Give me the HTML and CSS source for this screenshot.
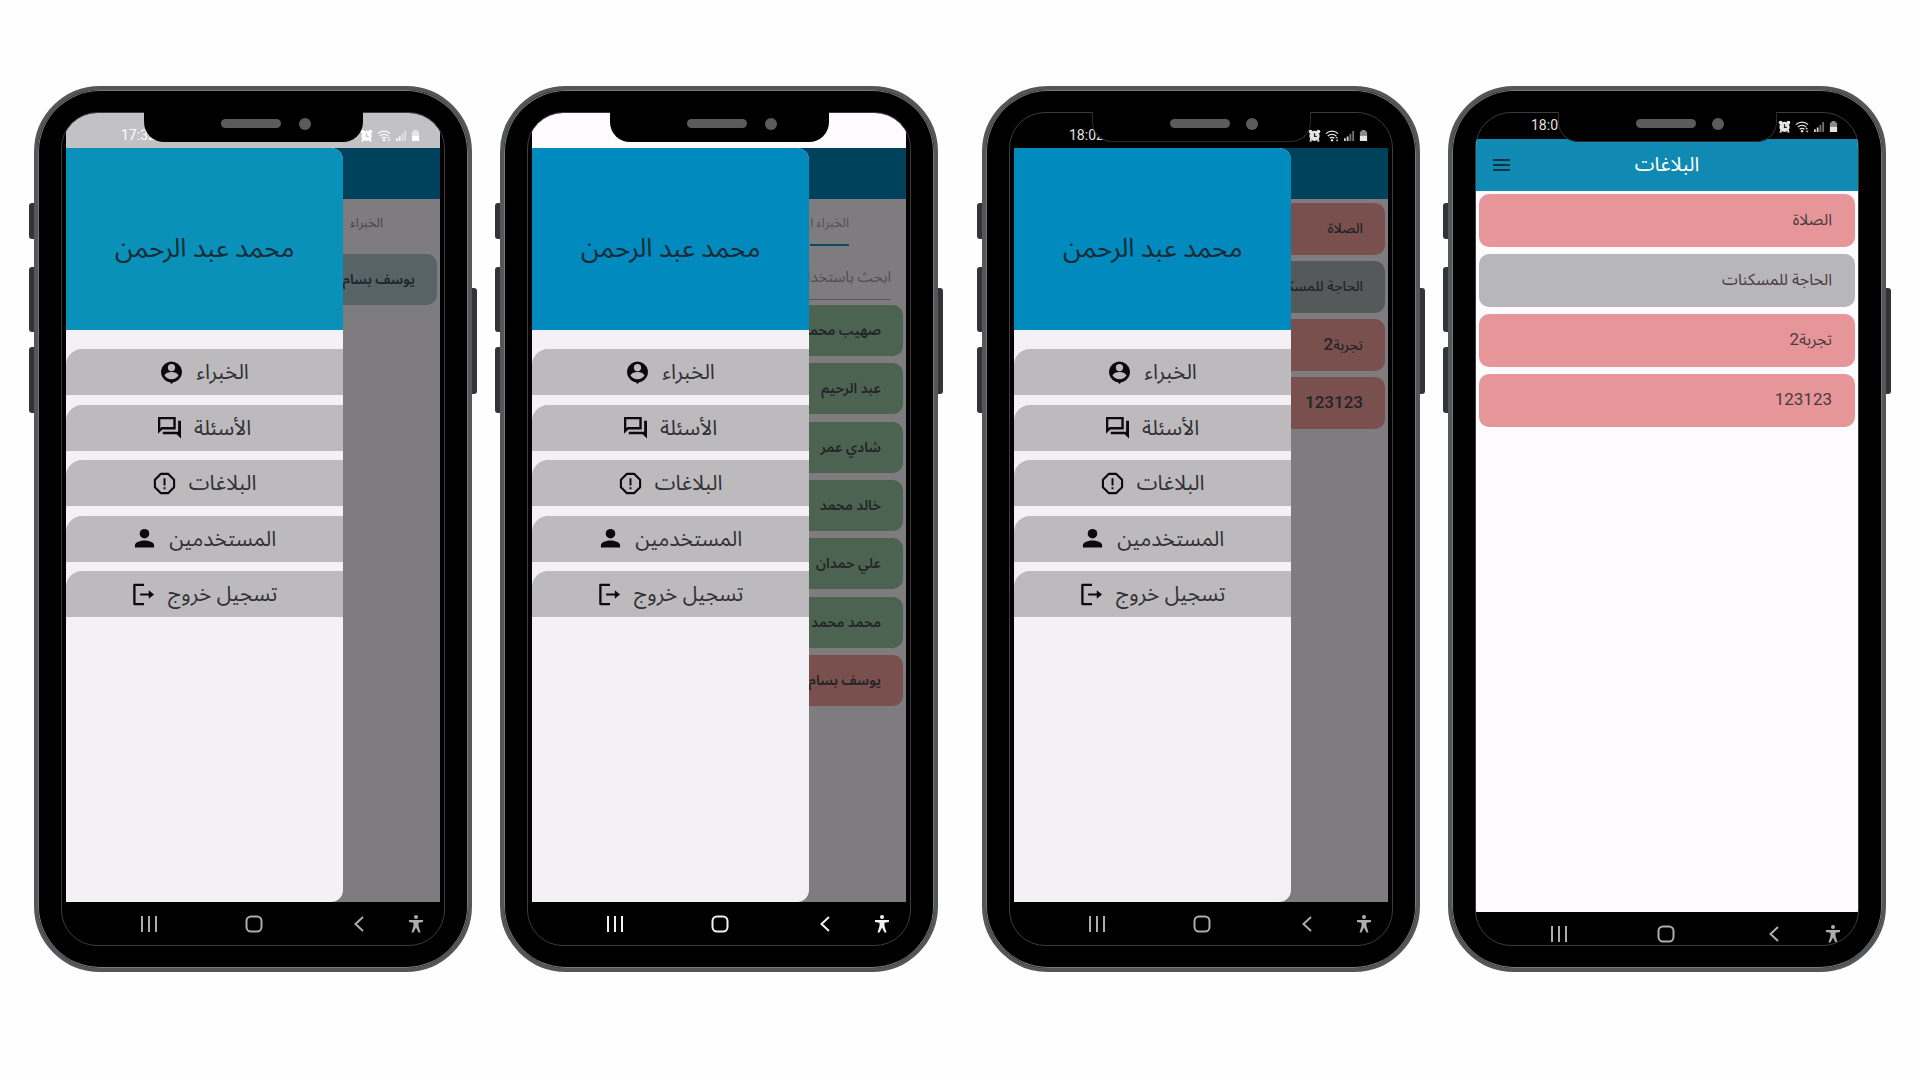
FILE: index.html
```html
<!DOCTYPE html>
<html lang="ar">
<head>
<meta charset="utf-8">
<title>البلاغات</title>
<link rel="stylesheet" href="styles.css">
</head>
<body>
<svg class="sprite" aria-hidden="true">
  <symbol id="pin" viewBox="0 0 24 24"><path fill-rule="evenodd" d="M12 .5a11 11 0 0 0-4 21.200l2.200.5L12 24l1.800-1.800 2.200-.5A11 11 0 0 0 12 .5zm0 2.600a3.800 3.800 0 1 1 0 7.600 3.800 3.800 0 0 1 0-7.600zM12 19c-3 0-5.800-1.300-7.300-3.800.8-2.400 4.800-3.600 7.300-3.600s6.500 1.200 7.300 3.600c-1.500 2.500-4.300 3.800-7.300 3.800z"/></symbol>
  <symbol id="chat" viewBox="0 0 24 24"><path d="M18.500 1H0v17.500L4.500 14h14zM16 3.400v8.200H3.600l-1.200 1.200V3.400zM21 5v11.500H5V19h14.500l4.500 4.500V5z"/></symbol>
  <symbol id="report" viewBox="0 0 24 24"><path d="M8 2h8l6 6v8l-6 6H8l-6-6V8z" fill="none" stroke="currentColor" stroke-width="2.200" stroke-linejoin="round"/><path d="M11 6.500h2v7.500h-2zM11 16h2v2h-2z"/></symbol>
  <symbol id="person" viewBox="0 0 24 24"><circle cx="12" cy="7" r="5"/><path d="M2 21.500v-2.500c0-3.500 6-5 10-5s10 1.500 10 5v2.500z"/></symbol>
  <symbol id="logout" viewBox="0 0 24 24"><path d="M12.500 2H2.500v20h10" fill="none" stroke="currentColor" stroke-width="2.400" stroke-linejoin="round"/><path d="M8.500 10.900h9V7.500L23 12l-5.500 4.500v-3.400h-9z"/></symbol>
  <symbol id="alarm" viewBox="0 0 14 14"><circle cx="7" cy="7.500" r="5.500"/><circle cx="2.800" cy="2.800" r="2"/><circle cx="11.200" cy="2.800" r="2"/><path d="M2.500 10L1.500 13.500h3zM11.500 10l1 3.500h-3z"/><path class="hand" d="M7 4.500v3.500h2.500" fill="none" stroke-width="1.300"/></symbol>
  <symbol id="wifi" viewBox="0 0 16 14"><path d="M1 5a9 9 0 0 1 13 0M3 7.500a6.500 6.500 0 0 1 9 0M5 10a3.500 3.500 0 0 1 5 0" fill="none" stroke="currentColor" stroke-width="1.400"/><circle cx="7.500" cy="12" r="1.300"/><path d="M11 10l1.500-2L14 10zM11.500 11.500l1.500 2 1.500-2z"/></symbol>
  <symbol id="signal" viewBox="0 0 12 14"><path opacity=".9" d="M0 10h2v3H0zM3 8h2v5H3z"/><path opacity=".5" d="M6 5h2v8H6zM9 2h2v11H9z"/></symbol>
  <symbol id="battery" viewBox="0 0 10 14"><path opacity=".6" d="M3 1h4v1l2 1v4H1V3l2-1z"/><path d="M1 7h8v6H1z"/></symbol>
  <symbol id="recents" viewBox="0 0 18 18"><path d="M2 1v16M9 1v16M16 1v16" fill="none" stroke="currentColor" stroke-width="2"/></symbol>
  <symbol id="home" viewBox="0 0 18 18"><rect x="1.500" y="1.500" width="15" height="15" rx="4.500" fill="none" stroke="currentColor" stroke-width="2"/></symbol>
  <symbol id="back" viewBox="0 0 18 18"><path d="M13 2L5.500 9l7.500 7" fill="none" stroke="currentColor" stroke-width="2"/></symbol>
  <symbol id="access" viewBox="0 0 18 18"><circle cx="9" cy="2" r="2"/><path d="M2 5h14v2l-4.500.8V11l2 6.500h-2L9 12.500 6.500 17.500h-2l2-6.500V7.800L2 7z"/></symbol>
</svg>

<main class="gallery">
  <div class="pair">
    <section class="phone phone-soft">
      <i class="key key-a"></i><i class="key key-b"></i><i class="key key-c"></i><i class="key key-power"></i>
      <div class="notch"><i class="speaker"></i><i class="camera"></i></div>
      <div class="screen">
        <div class="status"><time>17:32</time><span class="signs"><svg class="s14"><use href="#alarm"/></svg><svg class="s16"><use href="#wifi"/></svg><svg class="s12"><use href="#signal"/></svg><svg class="s10"><use href="#battery"/></svg></span></div>
        <div class="app">
          <div class="behind" dir="rtl">
            <div class="bar"></div>
            <div class="tabs"><a href="#experts">الخبراء</a></div>
            <ul class="cards cards-one"><li class="teal">يوسف بسام</li></ul>
          </div>
          <nav class="drawer" dir="rtl">
            <h2 class="owner">محمد عبد الرحمن</h2>
            <div class="menu">
              <a href="#experts">الخبراء<svg><use href="#pin"/></svg></a>
              <a href="#questions">الأسئلة<svg><use href="#chat"/></svg></a>
              <a href="#reports">البلاغات<svg><use href="#report"/></svg></a>
              <a href="#users">المستخدمين<svg><use href="#person"/></svg></a>
              <a href="#logout">تسجيل خروج<svg><use href="#logout"/></svg></a>
            </div>
          </nav>
        </div>
        <div class="keys"><button aria-label="recents"><svg><use href="#recents"/></svg></button><button aria-label="home"><svg><use href="#home"/></svg></button><button aria-label="back"><svg><use href="#back"/></svg></button><button aria-label="accessibility"><svg><use href="#access"/></svg></button></div>
      </div>
    </section>

    <section class="phone phone-light">
      <i class="key key-a"></i><i class="key key-b"></i><i class="key key-c"></i><i class="key key-power"></i>
      <div class="notch"><i class="speaker"></i><i class="camera"></i></div>
      <div class="screen">
        <div class="status"></div>
        <div class="app">
          <div class="behind" dir="rtl">
            <div class="bar"></div>
            <div class="tabs tabs-active"><a href="#experts">الخبراء ا</a></div>
            <input class="search" type="text" aria-label="ابحث" placeholder="ابحث باستخدام">
            <ul class="cards cards-seven"><li class="green">صهيب محمد</li><li class="green">عبد الرحيم</li><li class="green">شادي عمر</li><li class="green">خالد محمد</li><li class="green">علي حمدان</li><li class="green">محمد محمد</li><li class="red">يوسف بسام</li></ul>
          </div>
          <nav class="drawer" dir="rtl">
            <h2 class="owner">محمد عبد الرحمن</h2>
            <div class="menu">
              <a href="#experts">الخبراء<svg><use href="#pin"/></svg></a>
              <a href="#questions">الأسئلة<svg><use href="#chat"/></svg></a>
              <a href="#reports">البلاغات<svg><use href="#report"/></svg></a>
              <a href="#users">المستخدمين<svg><use href="#person"/></svg></a>
              <a href="#logout">تسجيل خروج<svg><use href="#logout"/></svg></a>
            </div>
          </nav>
        </div>
        <div class="keys"><button aria-label="recents"><svg><use href="#recents"/></svg></button><button aria-label="home"><svg><use href="#home"/></svg></button><button aria-label="back"><svg><use href="#back"/></svg></button><button aria-label="accessibility"><svg><use href="#access"/></svg></button></div>
      </div>
    </section>
  </div>

  <div class="pair">
    <section class="phone phone-dark">
      <i class="key key-a"></i><i class="key key-b"></i><i class="key key-c"></i><i class="key key-power"></i>
      <div class="notch"><i class="speaker"></i><i class="camera"></i></div>
      <div class="screen">
        <div class="status"><time>18:02</time><span class="signs"><svg class="s14"><use href="#alarm"/></svg><svg class="s16"><use href="#wifi"/></svg><svg class="s12"><use href="#signal"/></svg><svg class="s10"><use href="#battery"/></svg></span></div>
        <div class="app">
          <div class="behind" dir="rtl">
            <div class="bar"></div>
            <ul class="cards cards-four"><li class="red">الصلاة</li><li class="slate">الحاجة للمسكنات</li><li class="red">تجربة<b>2</b></li><li class="red"><b>123123</b></li></ul>
          </div>
          <nav class="drawer" dir="rtl">
            <h2 class="owner">محمد عبد الرحمن</h2>
            <div class="menu">
              <a href="#experts">الخبراء<svg><use href="#pin"/></svg></a>
              <a href="#questions">الأسئلة<svg><use href="#chat"/></svg></a>
              <a href="#reports">البلاغات<svg><use href="#report"/></svg></a>
              <a href="#users">المستخدمين<svg><use href="#person"/></svg></a>
              <a href="#logout">تسجيل خروج<svg><use href="#logout"/></svg></a>
            </div>
          </nav>
        </div>
        <div class="keys"><button aria-label="recents"><svg><use href="#recents"/></svg></button><button aria-label="home"><svg><use href="#home"/></svg></button><button aria-label="back"><svg><use href="#back"/></svg></button><button aria-label="accessibility"><svg><use href="#access"/></svg></button></div>
      </div>
    </section>

    <section class="phone phone-dark phone-full">
      <i class="key key-a"></i><i class="key key-b"></i><i class="key key-c"></i><i class="key key-power"></i>
      <div class="notch"><i class="speaker"></i><i class="camera"></i></div>
      <div class="screen">
        <div class="status"><time>18:0</time><span class="signs"><svg class="s14"><use href="#alarm"/></svg><svg class="s16"><use href="#wifi"/></svg><svg class="s12"><use href="#signal"/></svg><svg class="s10"><use href="#battery"/></svg></span></div>
        <div class="page">
          <header class="topbar"><button class="burger" aria-label="menu"><i></i><i></i><i></i></button><h1>البلاغات</h1></header>
          <ul class="list" dir="rtl"><li class="pink">الصلاة</li><li class="silver">الحاجة للمسكنات</li><li class="pink">تجربة<b>2</b></li><li class="pink"><b>123123</b></li></ul>
        </div>
        <div class="keys"><button aria-label="recents"><svg><use href="#recents"/></svg></button><button aria-label="home"><svg><use href="#home"/></svg></button><button aria-label="back"><svg><use href="#back"/></svg></button><button aria-label="accessibility"><svg><use href="#access"/></svg></button></div>
      </div>
    </section>
  </div>
</main>
</body>
</html>
```

FILE: styles.css
```css
* { box-sizing: border-box; }
body {
  margin: 0;
  background: #fefefe;
  font-family: Roboto, "Noto Sans Arabic", "DejaVu Sans", sans-serif;
}
h1, h2, ul { margin: 0; padding: 0; font-weight: 400; }
ul { list-style: none; }
a { color: inherit; text-decoration: none; }
button { border: 0; padding: 0; background: none; color: inherit; display: flex; }
svg { fill: currentColor; display: block; flex: none; }
.sprite { position: absolute; width: 0; height: 0; }

.gallery { display: flex; gap: 44px; padding: 86px 34px 0; }
.pair { display: flex; gap: 28px; flex: 1; }

/* Handset */
.phone {
  position: relative;
  display: flex;
  flex: 1;
  min-width: 0;
  min-height: 886px;
  padding: 21px 22px;
  border: 4px solid #555658;
  border-radius: 66px;
  background: #000;
  box-shadow: inset 0 0 0 1px #77797a;
  padding: 22px 23px;
}
.key { position: absolute; left: -9px; width: 5px; background: #343436; border-radius: 3px 0 0 3px; }
.key-a { top: 113px; height: 36px; }
.key-b { top: 177px; height: 65px; }
.key-c { top: 257px; height: 66px; }
.key-power { left: auto; right: -9px; top: 198px; height: 106px; border-radius: 0 3px 3px 0; }

.notch {
  position: absolute;
  z-index: 2;
  top: 22px;
  left: 50%;
  width: 219px;
  height: 30px;
  margin-left: -109px;
  padding: 7px 52px 0 77px;
  display: flex;
  justify-content: space-between;
  background: #000;
  border-radius: 0 0 20px 20px;
}
.phone-dark .notch { border: 1px solid #2c2c2c; border-top: 0; }
.speaker { width: 60px; height: 9px; border-radius: 5px; background: #5b5b5c; }
.camera { width: 12px; height: 12px; margin-top: -1px; border-radius: 50%; background: #5b5b5c; }

.screen {
  flex: 1;
  min-width: 0;
  display: flex;
  flex-direction: column;
  padding: 0 4px;
  border: 1px solid #3c3c3c;
  border-radius: 36px;
  overflow: hidden;
  background: #000;
}

/* System bars */
.status {
  display: flex;
  justify-content: space-between;
  height: 35px;
  padding: 10px 20px 0 55px;
  font-size: 14px;
  line-height: 24px;
  color: #fff;
}
.phone-dark .status { color: #e4e4e4; }
.phone-soft .status { background: #c2c1c4; --face: #c2c1c4; }
.phone-light .status { background: #fdfbfd; }
.signs { display: flex; align-items: center; gap: 4px; }
.signs svg { height: 13px; }
.hand { stroke: var(--face, #222); }
.s14 { width: 13px; }
.s16 { width: 15px; }
.s12 { width: 11px; }
.s10 { width: 9px; }

.keys {
  display: flex;
  align-items: center;
  justify-content: space-between;
  height: 43px;
  padding: 1px 15px 0 74px;
  color: #adadad;
}
.keys svg { width: 18px; height: 18px; }
.keys button:nth-child(3) { margin-right: -48px; }
.phone-light .keys { color: #f2f2f2; }

/* Screen with open drawer */
.app {
  flex: 1;
  display: grid;
  grid-template-columns: 278fr 97fr;
  background: #7f7c80;
}
.behind { grid-area: 1 / 1 / 2 / 3; color: #222327; min-width: 0; }
.drawer {
  grid-area: 1 / 1;
  z-index: 1;
  background: #f3f0f6;
  border-radius: 0 12px 12px 0;
  overflow: hidden;
}
.bar { height: 51px; background: #00425c; }
.tabs {
  height: 47px;
  padding-right: 57px;
  font-size: 13px;
  line-height: 47px;
  color: #454448;
  display: flex;
}
.tabs-active { color: #525155; }
.tabs-active a { border-bottom: 2px solid #0a4b63; }
.search {
  display: block;
  width: calc(100% - 30px);
  height: 54px;
  margin: 0 15px;
  padding: 8px 0 0;
  border: 0;
  border-bottom: 1px solid #5a595c;
  background: none;
  font: inherit;
  font-size: 15px;
  color: inherit;
}
.search::placeholder { color: #4d4c50; opacity: 1; }

.cards { display: flex; flex-direction: column; justify-content: space-between; padding: 0 3px; font-size: 14px; font-weight: 600; }
.cards li { height: 51px; padding-right: 22px; line-height: 50px; border-radius: 10px; }
.cards b { font-size: 17px; font-weight: 500; }
.cards-one { margin-top: 8px; }
.cards-seven { margin-top: 5px; height: 401px; }
.cards-four { margin-top: 4px; height: 226px; font-weight: 500; }
.cards-four li { height: 52px; }
.teal { background: #566467; }
.green { background: #4d6351; }
.red { background: #7a504e; }
.slate { background: #555959; }

.owner {
  height: 182px;
  padding-top: 76px;
  font-size: 26px;
  line-height: 48px;
  text-align: center;
  background: #008abe;
  color: #1a2b35;
}
.phone-soft .owner { background: #0991b9; }
.menu {
  display: flex;
  flex-direction: column;
  justify-content: space-between;
  height: 268px;
  margin-top: 19px;
  font-size: 21px;
  color: #323135;
}
.menu a {
  display: flex;
  align-items: center;
  justify-content: center;
  gap: 13px;
  height: 46px;
  border-radius: 16px 0 0 0;
  background: #bdbabe;
}
.menu svg { width: 23px; height: 23px; color: #0a0a0a; }

/* Reports screen */
.phone-full .screen { padding: 0; }
.phone-full .status { height: 26px; padding: 0 20px 0 55px; }
.page { flex: 1; background: #fdfbfe; }
.topbar {
  display: grid;
  grid-template-columns: 1fr auto 1fr;
  align-items: center;
  height: 52px;
  padding: 0 17px;
  background: #108ab3;
}
.topbar h1 { font-size: 20px; line-height: 46px; padding-bottom: 2px; color: #fff; }
.burger { flex-direction: column; gap: 3px; width: 17px; }
.burger i { height: 2px; width: 17px; background: #0c3444; }
.list { display: grid; gap: 7px; padding: 3px; font-size: 16px; color: #4a3a3e; }
.list li { height: 53px; padding-right: 23px; line-height: 51px; border-radius: 10px; }
.list b { font-size: 17px; font-weight: 400; }
.pink { background: #e69699; }
.silver { background: #b7b6bb; }
.phone-full .keys { height: 33px; padding: 11px 16px 0 74px; }
```
